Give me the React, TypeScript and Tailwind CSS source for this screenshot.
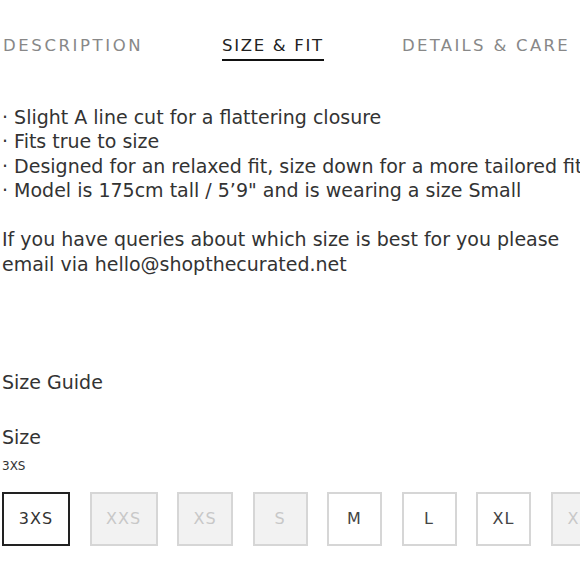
import React from 'react';

const font = { fontFamily: '"DejaVu Sans", "Noto Sans", sans-serif' };

const sizes = [
    { label: '3XS', disabled: false, selected: true, w: 'w-[68px]' },
    { label: 'XXS', disabled: true, selected: false, w: 'w-[68px]' },
    { label: 'XS', disabled: true, selected: false, w: 'w-[56px]' },
    { label: 'S', disabled: true, selected: false, w: 'w-[55px]' },
    { label: 'M', disabled: false, selected: false, w: 'w-[55px]' },
    { label: 'L', disabled: false, selected: false, w: 'w-[55px]' },
    { label: 'XL', disabled: false, selected: false, w: 'w-[55px]' },
    { label: 'XXL', disabled: true, selected: false, w: 'w-[68px]' },
];

export default function App() {
    return (
        <div className="w-[580px] h-[580px] overflow-hidden bg-white text-[#333]" style={font}>
            {/* Tabs */}
            <div className="flex items-start pt-[34px] pl-[3px] text-[16.5px] tracking-[2.3px] uppercase whitespace-nowrap">
                <div className="text-[#888] w-[219px] tracking-[2.6px]">Description</div>
                <div className="w-[180px]">
                    <div className="inline-block border-b-2 border-[#111] text-[#222] tracking-[1.7px]">Size &amp; Fit</div>
                </div>
                <div className="text-[#888]">Details &amp; Care</div>
            </div>

            {/* Copy */}
            <div className="pl-[2px] pt-[44px] text-[19px] leading-[24.5px] whitespace-nowrap">
                <p>· Slight A line cut for a flattering closure</p>
                <p>· Fits true to size</p>
                <p>· Designed for an relaxed fit, size down for a more tailored fit</p>
                <p>· Model is 175cm tall / 5’9" and is wearing a size Small</p>
                <p className="mt-[24.5px]">If you have queries about which size is best for you please</p>
                <p>email via hello@shopthecurated.net</p>
            </div>

            <div className="pl-[2px] pt-[92px] text-[19px]">Size Guide</div>

            <div className="pl-[2px] pt-[26px] text-[19px]">Size</div>
            <div className="pl-[2px] pt-[6px] text-[12px]">3XS</div>

            <div className="flex gap-[19.5px] pl-[2px] pt-[17px] whitespace-nowrap">
                {sizes.map((s) => (
                    <div
                        key={s.label}
                        className={`${s.w} shrink-0 h-[54px] flex items-center justify-center text-[16px] tracking-[1px] border-2 ${
                            s.selected
                                ? 'border-[#222] bg-white text-[#333]'
                                : s.disabled
                                ? 'border-[#d6d6d6] bg-[#f2f2f2] text-[#c8c8c8]'
                                : 'border-[#d6d6d6] bg-white text-[#444]'
                        }`}
                    >
                        {s.label}
                    </div>
                ))}
            </div>
        </div>
    );
}
